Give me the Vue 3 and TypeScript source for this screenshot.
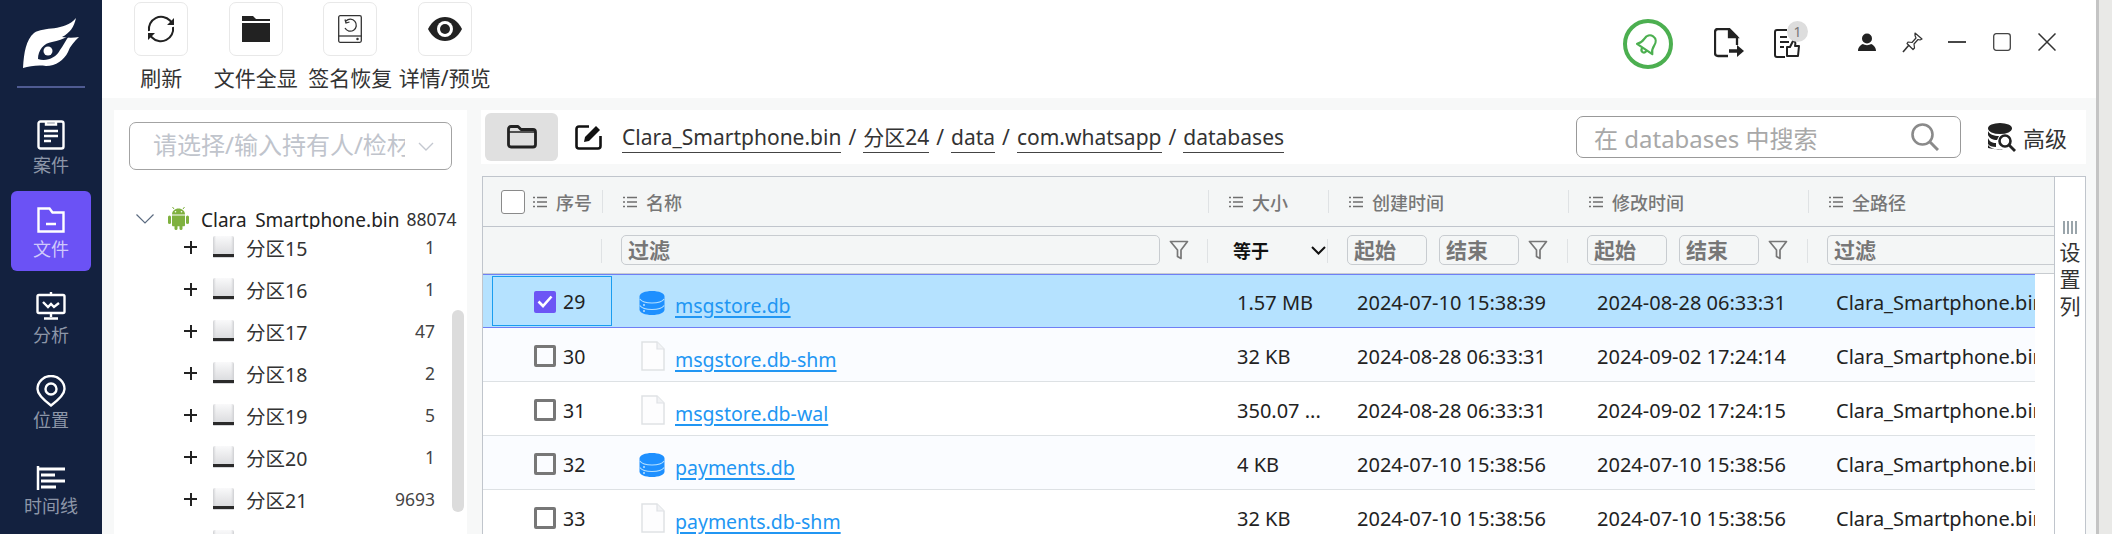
<script setup lang="ts">
interface Row { no: number; name: string; db: boolean; size: string; created: string; modified: string }

const partitions: { id: number; label: string; count: string }[] = [
  { id: 15, label: '分区15', count: '1' },
  { id: 16, label: '分区16', count: '1' },
  { id: 17, label: '分区17', count: '47' },
  { id: 18, label: '分区18', count: '2' },
  { id: 19, label: '分区19', count: '5' },
  { id: 20, label: '分区20', count: '1' },
  { id: 21, label: '分区21', count: '9693' },
  { id: 22, label: '', count: '' },
]

const rows: Row[] = [
  { no: 29, name: 'msgstore.db', db: true, size: '1.57 MB', created: '2024-07-10 15:38:39', modified: '2024-08-28 06:33:31' },
  { no: 30, name: 'msgstore.db-shm', db: false, size: '32 KB', created: '2024-08-28 06:33:31', modified: '2024-09-02 17:24:14' },
  { no: 31, name: 'msgstore.db-wal', db: false, size: '350.07 ...', created: '2024-08-28 06:33:31', modified: '2024-09-02 17:24:15' },
  { no: 32, name: 'payments.db', db: true, size: '4 KB', created: '2024-07-10 15:38:56', modified: '2024-07-10 15:38:56' },
  { no: 33, name: 'payments.db-shm', db: false, size: '32 KB', created: '2024-07-10 15:38:56', modified: '2024-07-10 15:38:56' },
]

const crumbs = ['Clara_Smartphone.bin', '分区24', 'data', 'com.whatsapp', 'databases']
const heads = ['大小', '创建时间', '修改时间', '全路径']
</script>

<template>
  <div class="app">
    <svg class="defs" aria-hidden="true">
      <symbol id="list" viewBox="0 0 14 12">
        <path d="M0 1.500h2M4 1.500h10M0 6h2M4 6h10M0 10.500h2M4 10.500h10" fill="none" stroke="#6f6f6f" stroke-width="1.700" />
      </symbol>
      <symbol id="funnel" viewBox="0 0 20 20">
        <path d="M1.500 1.500h17L12 10v8.500L8.500 16.500V10z" fill="none" stroke="#777" stroke-width="1.700" stroke-linejoin="round" />
      </symbol>
      <symbol id="file" viewBox="0 0 24 30">
        <path d="M1 1h15l7 7v21H1z" fill="#fdfdfe" stroke="#dfe2e5" stroke-width="1.500" />
        <path d="M16 1v7h7" fill="#f1f2f4" stroke="#dfe2e5" stroke-width="1.200" />
      </symbol>
      <symbol id="db" viewBox="0 0 26 26">
        <path d="M13 1C6 1 .5 3.200.5 6.500v13C.5 22.800 6 25 13 25s12.500-2.200 12.500-5.500v-13C25.500 3.200 20 1 13 1z" fill="#1e90ff" />
        <path d="M.8 9c2 2.800 7 4 12.200 4s10.200-1.200 12.200-4M.8 15.500c2 2.800 7 4 12.200 4s10.200-1.200 12.200-4" fill="none" stroke="#b5e0ff" stroke-width="1.200" />
        <circle cx="5" cy="15" r=".9" fill="#cdeaff" />
        <circle cx="5" cy="21" r=".9" fill="#cdeaff" />
      </symbol>
    </svg>

    <nav class="sidebar">
      <div class="logo">
        <svg width="58" height="54" viewBox="22 17 58 54">
          <path d="M23 68C24 52 26 40 34 33 44 26 64 32 76 18 74 27 70 33 62 37 68 38 74 38 79 37 74 42 70 46 68 52 64 60 56 66 46 66 38 65 30 66 23 68Z" fill="#fff" />
          <path d="M38 59C38 50 44 43 52 42 58 41 63 39 69 36 66 40 63 46 60 50 56 58 46 62 38 59Z" fill="#13213f" />
          <circle cx="48" cy="51" r="4.500" fill="#fff" />
        </svg>
      </div>
      <div class="nav-item n-case">
        <svg width="28" height="30" viewBox="0 0 28 30" fill="none" stroke="#fff" stroke-width="2.400">
          <rect x="1.500" y="1.500" width="25" height="27" rx="2" />
          <path d="M9 1.500v3h10v-3M7 11h14M7 16h14M7 21h7" />
        </svg>
        <span>案件</span>
      </div>
      <div class="nav-item active">
        <svg width="28" height="26" viewBox="0 0 28 26" fill="none" stroke="#fff" stroke-width="2.400">
          <path d="M1.500 1.500h11l3 4h11v19h-25zM9 17h10" />
        </svg>
        <span>文件</span>
      </div>
      <div class="nav-item n-ana">
        <svg width="30" height="28" viewBox="0 0 30 28" fill="none" stroke="#fff" stroke-width="2.400">
          <rect x="1.500" y="3" width="27" height="18" rx="1.500" />
          <path d="M15 0v3M15 21v4M8 26.500h14M7 10l5 5 3-3 3 3 5-4" />
        </svg>
        <span>分析</span>
      </div>
      <div class="nav-item n-loc">
        <svg width="30" height="32" viewBox="0 0 30 32" fill="none" stroke="#fff" stroke-width="2.400">
          <path d="M15 30.500C9 26 1.500 20 1.500 14a13.500 13 0 0 1 27 0c0 6-7.500 12-13.500 16.500z" />
          <circle cx="15" cy="14" r="5.500" />
        </svg>
        <span>位置</span>
      </div>
      <div class="nav-item n-time">
        <svg width="30" height="24" viewBox="0 0 30 24" fill="none" stroke="#fff" stroke-width="3">
          <path d="M2 0v24" stroke-width="2.500" />
          <path d="M2 3h27M5 9h14M5 15h24M5 21h15" />
        </svg>
        <span>时间线</span>
      </div>
    </nav>

    <div class="main">
      <header class="toolbar">
        <div class="tools">
          <div class="tool">
            <div class="tool-btn">
              <svg width="30" height="30" viewBox="0 0 30 30" fill="none" stroke="#222" stroke-width="2">
                <path d="M3 17a12.300 12.300 0 0 1 21-10.500L27 10M27 13a12.300 12.300 0 0 1-21 10.500L3 20" />
                <path d="M28 4v7h-7M2 26v-7h7" stroke-width="0" fill="#222" />
              </svg>
            </div>
            <span>刷新</span>
          </div>
          <div class="tool">
            <div class="tool-btn">
              <svg width="28" height="26" viewBox="0 0 28 26">
                <path d="M0 0h11l3 3h14v2H0z M0 7h28v19H0z" fill="#222" />
              </svg>
            </div>
            <span>文件全显</span>
          </div>
          <div class="tool">
            <div class="tool-btn">
              <svg width="24" height="28" viewBox="0 0 24 28" fill="none" stroke="#333" stroke-width="1.300">
                <rect x=".7" y=".7" width="22.600" height="26.600" rx="1.500" />
                <path d="M.7 21h22.600" />
                <path d="M8 6a6 6 0 1 1-1 7" />
                <path d="M7 4.500l1 3.500 3.500-1" />
                <circle cx="19.500" cy="24" r=".6" fill="#333" />
              </svg>
            </div>
            <span>签名恢复</span>
          </div>
          <div class="tool">
            <div class="tool-btn">
              <svg width="34" height="24" viewBox="0 0 34 24">
                <path d="M0 12C4 4 10 0 17 0s13 4 17 12c-4 8-10 12-17 12S4 20 0 12z" fill="#222" />
                <circle cx="17" cy="12" r="8" fill="#fff" />
                <circle cx="17" cy="12" r="5" fill="#222" />
              </svg>
            </div>
            <span>详情/预览</span>
          </div>
        </div>
        <div class="actions">
          <div class="bell">
            <svg width="26" height="26" viewBox="0 0 24 24" fill="none" stroke="#4caf50" stroke-width="2" stroke-linejoin="round">
              <g transform="rotate(34 12 12)">
                <path d="M12 3.500c-3.500 0-5.500 2.800-5.500 6.500 0 3.500-1 5.500-3 7.500h17c-2-2-3-4-3-7.500 0-3.700-2-6.500-5.500-6.500z" />
                <path d="M9.500 17.500c0 2 1 3.500 2.500 3.500s2.500-1.500 2.500-3.500" />
              </g>
            </svg>
          </div>
          <svg class="ic-export" width="30" height="30" viewBox="0 0 30 30" fill="none" stroke="#222" stroke-width="2.300">
            <path d="M14 28H4c-2 0-3-1-3-3V4c0-2 1-3 3-3h11l8 8v8" />
            <path d="M15 1v8h8z" fill="#222" />
            <path d="M15 23h10" stroke-width="3.500" />
            <path d="M23 17l7 6-7 6z" fill="#222" stroke="none" />
          </svg>
          <div class="doc">
            <svg width="26" height="29" viewBox="0 0 26 29" fill="none" stroke="#222" stroke-width="2">
              <path d="M11 28H3c-1.200 0-2-.8-2-2V3c0-1.200.8-2 2-2h10M6 8h7M6 13h9M6 18h4" />
              <path d="M13 18h3l3-6c2 0 3 1 2 5h4l-1 10H13z" stroke-linejoin="round" />
            </svg>
            <span class="badge">1</span>
          </div>
          <svg class="ic-user" width="18" height="18" viewBox="0 0 18 18" fill="#222">
            <circle cx="9" cy="5.500" r="5" />
            <path d="M0 18c0-4 3-6.500 5-7 2 1.500 6 1.500 8 0 2 .5 5 3 5 7z" />
          </svg>
          <svg class="ic-pin" width="21" height="21" viewBox="0 0 21 21" fill="none" stroke="#333" stroke-width="1.200" stroke-linejoin="round">
            <path d="M13 1l7 6-2 1-2-.5-4 4.500.5 4-1.500 1.500-6-6L6 10l4 .5 4-4.500L13 3.500z" />
            <path d="M7 13l-6 7" stroke-width="1.600" />
          </svg>
          <svg class="ic-win" width="18" height="18" viewBox="0 0 18 18" stroke="#333" stroke-width="1.800"><path d="M0 9h18" /></svg>
          <svg class="ic-win" width="18" height="18" viewBox="0 0 18 18" fill="none" stroke="#444" stroke-width="1.300"><rect x=".7" y=".7" width="16.600" height="16.600" rx="2.500" /></svg>
          <svg class="ic-win" width="18" height="18" viewBox="0 0 18 18" fill="none" stroke="#333" stroke-width="1.500"><path d="M.5.500l17 17M17.500.500l-17 17" /></svg>
        </div>
      </header>

      <div class="content">
        <aside class="tree">
          <div class="select">
            <span class="select-text">请选择/输入持有人/检材</span>
            <svg width="16" height="9" viewBox="0 0 16 9" fill="none" stroke="#c4c8d0" stroke-width="1.400"><path d="M1 1l7 7 7-7" /></svg>
          </div>
          <div class="root">
            <svg class="root-chev" width="18" height="10" viewBox="0 0 18 10" fill="none" stroke="#5b6b80" stroke-width="1.200"><path d="M.5.500L9 9 17.500.500" /></svg>
            <svg class="android" width="21" height="23" viewBox="0 0 21 23" fill="#7fb13f">
              <path d="M4 7.500C4 4 7 1.500 10.500 1.500S17 4 17 7.500z" />
              <path d="M6 2L4.500 0M15 2l1.500-2" stroke="#7fb13f" stroke-width="1" />
              <path d="M4 8.500h13v9.500c0 .8-.5 1.300-1.200 1.300H5.200C4.500 19.300 4 18.800 4 18z" />
              <rect x="0" y="8.500" width="3" height="8.500" rx="1.500" />
              <rect x="18" y="8.500" width="3" height="8.500" rx="1.500" />
              <rect x="6.500" y="18" width="3" height="5" rx="1.500" />
              <rect x="11.500" y="18" width="3" height="5" rx="1.500" />
              <circle cx="7.500" cy="4.800" r=".8" fill="#fff" />
              <circle cx="13.500" cy="4.800" r=".8" fill="#fff" />
            </svg>
            <span class="root-name">Clara_Smartphone.bin</span>
            <span class="root-count">88074</span>
          </div>
          <div v-for="p in partitions" :key="p.id" class="node">
            <span class="plus"></span>
            <span class="disk"></span>
            <span class="node-name">{{ p.label }}</span>
            <span class="node-count">{{ p.count }}</span>
          </div>
          <div class="thumb"></div>
        </aside>

        <section class="right">
          <div class="crumbbar">
            <div class="folder-btn">
              <svg width="30" height="24" viewBox="0 0 30 24" fill="none" stroke="#222" stroke-width="2.800" stroke-linejoin="round">
                <path d="M1.500 4c0-1.500 1-2.500 2.500-2.500h7l3 3h12c1.500 0 2.500 1 2.500 2.500v12.500c0 1.500-1 2.500-2.500 2.500H4c-1.500 0-2.500-1-2.500-2.500z" />
                <path d="M1.500 7h27" stroke-width="1.500" />
              </svg>
            </div>
            <svg class="edit" width="28" height="27" viewBox="0 0 28 27" fill="none" stroke="#111" stroke-width="2.600">
              <path d="M14 2.500H4c-1.500 0-2.500 1-2.500 2.500v17c0 1.500 1 2.500 2.500 2.500h19c1.500 0 2.500-1 2.500-2.500V12" />
              <path d="M9 18l1-5L21 2l4 4-11 11z" fill="#111" stroke="none" />
            </svg>
            <div class="crumbs">
              <template v-for="(c, i) in crumbs" :key="c">
                <span v-if="i > 0" class="slash">/</span>
                <span class="crumb">{{ c }}</span>
              </template>
            </div>
            <div class="search">
              <span>在 databases 中搜索</span>
              <svg width="28" height="28" viewBox="0 0 28 28" fill="none" stroke="#8a8a8a" stroke-width="2.600">
                <circle cx="11.500" cy="11.500" r="10" />
                <path d="M18.500 18.500l8.500 8.500" stroke-width="3" />
              </svg>
            </div>
            <div class="adv">
              <svg width="28" height="29" viewBox="0 0 28 29">
                <ellipse cx="12" cy="5.500" rx="12" ry="5.500" fill="#222" />
                <path d="M0 8c1 3 6 5 11 5l-2 4C5 17 1 15 0 12z M0 15c1 3 4 5 8 5l0 4c-4 0-7-1-8-3z M0 22c2 3 6 4 10 5 2 0 4 0 5-.5C10 27 4 26 0 25z" fill="#222" />
                <circle cx="17" cy="18" r="5.500" fill="none" stroke="#222" stroke-width="2.600" />
                <path d="M21 22l6 6" stroke="#222" stroke-width="2.800" />
              </svg>
              <span>高级</span>
            </div>
          </div>

          <div class="table-wrap">
            <div class="table">
              <div class="thead">
                <div class="th first">
                  <span class="cb-head"></span>
                  <svg class="li" width="14" height="12"><use href="#list" /></svg>
                  <span>序号</span>
                </div>
                <div class="th name-th">
                  <svg class="li" width="14" height="12"><use href="#list" /></svg>
                  <span>名称</span>
                </div>
                <div v-for="h in heads" :key="h" class="th">
                  <svg class="li" width="14" height="12"><use href="#list" /></svg>
                  <span>{{ h }}</span>
                </div>
              </div>
              <div class="tfilter">
                <div class="tf"></div>
                <div class="tf tf-name">
                  <span class="inp grow">过滤</span>
                  <svg class="fn" width="20" height="20"><use href="#funnel" /></svg>
                </div>
                <div class="tf tf-eq">
                  <span>等于</span>
                  <svg width="15" height="9" viewBox="0 0 15 9" fill="none" stroke="#111" stroke-width="2"><path d="M1 1l6.500 6.500L14 1" /></svg>
                </div>
                <div class="tf tf-range">
                  <span class="inp small">起始</span>
                  <span class="inp small">结束</span>
                  <svg class="fn" width="20" height="20"><use href="#funnel" /></svg>
                </div>
                <div class="tf tf-range">
                  <span class="inp small">起始</span>
                  <span class="inp small">结束</span>
                  <svg class="fn" width="20" height="20"><use href="#funnel" /></svg>
                </div>
                <div class="tf tf-path">
                  <span class="inp grow">过滤</span>
                </div>
              </div>
              <div class="tbody">
                <div v-for="(r, i) in rows" :key="r.no" class="tr" :class="{ selected: i === 0, alt: i === 1 || i === 3 }">
                  <div class="td td-no" :class="{ focus: i === 0 }">
                    <span v-if="i === 0" class="cb on">
                      <svg width="16" height="13" viewBox="0 0 16 13" fill="none" stroke="#fff" stroke-width="2.600"><path d="M1.500 6.500l4.500 4.500L14.500 1.500" /></svg>
                    </span>
                    <span v-else class="cb"></span>
                    <span class="num">{{ r.no }}</span>
                  </div>
                  <div class="td td-name">
                    <svg v-if="r.db" class="ic-db" width="26" height="26"><use href="#db" /></svg>
                    <svg v-else class="ic-file" width="24" height="30"><use href="#file" /></svg>
                    <a class="link">{{ r.name }}</a>
                  </div>
                  <div class="td td-size">{{ r.size }}</div>
                  <div class="td td-date">{{ r.created }}</div>
                  <div class="td td-date">{{ r.modified }}</div>
                  <div class="td td-path">Clara_Smartphone.bin</div>
                </div>
              </div>
            </div>
            <div class="setcol">
              <div class="bars"><i></i><i></i><i></i><i></i></div>
              <span>设</span><span>置</span><span>列</span>
            </div>
          </div>
        </section>
      </div>
    </div>
    <div class="edge"></div>
  </div>
</template>

<style>
html, body { margin: 0; padding: 0; background: #fff; }
</style>

<style scoped>
.app {
  width: 2112px;
  height: 534px;
  display: flex;
  overflow: hidden;
  position: relative;
  font-family: "Noto Sans", "Noto Sans CJK SC", sans-serif;
  color: #333;
}
.defs { position: absolute; width: 0; height: 0; }
.sidebar {
  width: 102px;
  flex: none;
  background: #13213f;
  display: flex;
  flex-direction: column;
  align-items: center;
}
.logo {
  width: 68px;
  height: 88px;
  flex: none;
  padding-top: 17px;
  box-sizing: border-box;
  border-bottom: 2px solid #4f5b92;
  display: flex;
  justify-content: center;
  align-items: flex-start;
}
.nav-item {
  width: 80px;
  flex: none;
  display: flex;
  flex-direction: column;
  align-items: center;
  justify-content: flex-start;
  box-sizing: border-box;
  border-radius: 6px;
  color: #8d96a8;
  font-size: 18px;
  line-height: 24px;
}
.nav-item svg { margin-bottom: 3px; flex: none; }
.n-case { margin-top: 32px; height: 71px; }
.nav-item.active {
  height: 80px;
  padding-top: 16px;
  background: #6b52f5;
  color: #cfc9fb;
}
.nav-item.active svg { margin-bottom: 4px; }
.n-ana { margin-top: 21px; height: 83px; }
.n-loc { height: 91px; }
.n-loc svg { margin-bottom: 1px; }
.n-time { height: 68px; }
.n-time svg { margin-bottom: 4px; }
.main {
  width: 1994px;
  flex: none;
  display: flex;
  flex-direction: column;
  background: #f7f8f8;
}
.toolbar {
  height: 98px;
  flex: none;
  background: #fff;
  display: flex;
  padding-left: 12px;
}
.tools { display: grid; grid-template-columns: repeat(4, 94.5px); }
.tool { display: flex; flex-direction: column; align-items: center; }
.tool-btn {
  width: 54px;
  height: 54px;
  margin-top: 2px;
  box-sizing: border-box;
  border: 1px solid #e8e8e8;
  border-radius: 7px;
  display: flex;
  align-items: center;
  justify-content: center;
}
.tool span {
  font-size: 21px;
  line-height: 28px;
  margin-top: 8px;
  white-space: nowrap;
  color: #333;
}
.actions {
  margin-left: auto;
  height: 88px;
  display: flex;
  align-items: center;
  padding-right: 40px;
}
.bell {
  width: 50px;
  height: 50px;
  box-sizing: border-box;
  border: 4px solid #4caf50;
  border-radius: 50%;
  display: flex;
  align-items: center;
  justify-content: center;
}
.ic-export { margin-left: 41px; margin-top: -2px; }
.doc { margin-left: 30px; position: relative; height: 29px; margin-top: -2px; }
.doc svg { display: block; }
.badge {
  position: absolute;
  left: 13px;
  top: -8px;
  width: 21px;
  height: 21px;
  border-radius: 50%;
  background: #ddd;
  color: #777;
  font-size: 14px;
  line-height: 21px;
  text-align: center;
}
.ic-user { margin-left: 58px; margin-top: -4px; }
.ic-pin { margin-left: 26px; margin-top: -4px; }
.ic-win { margin-left: 27px; margin-top: -4px; }
.ic-pin + .ic-win { margin-left: 25px; }
.content { flex: 1; display: flex; padding: 12px 0 0 12px; min-height: 0; }
.tree {
  width: 353px;
  flex: none;
  background: #fff;
  position: relative;
  overflow: hidden;
  box-sizing: border-box;
}
.select {
  width: 323px;
  height: 48px;
  margin: 12px 0 28px 15px;
  box-sizing: border-box;
  border: 1px solid #a3a3a3;
  border-radius: 7px;
  display: flex;
  align-items: center;
  padding-left: 23px;
}
.select-text {
  width: 252px;
  overflow: hidden;
  white-space: nowrap;
  font-size: 24px;
  line-height: 32px;
  margin-top: -2px;
  color: #c0c4cc;
  margin-right: 13px;
}
.root { display: flex; align-items: center; height: 42px; margin-bottom: -14px; }
.root-chev { margin-left: 22px; }
.android { margin-left: 14px; margin-top: -2px; }
.root-name {
  margin-left: 12px;
  font-size: 19px;
  line-height: 24px;
  height: 21px;
  margin-bottom: 1px;
  overflow: hidden;
  color: #222;
  white-space: nowrap;
}
.root-count { margin-left: 7px; font-size: 17.500px; color: #333; }
.node { display: flex; align-items: center; height: 42px; }
.plus {
  width: 13px;
  height: 13px;
  margin-left: 70px;
  flex: none;
  background: linear-gradient(#222, #222) center/13px 2px no-repeat, linear-gradient(#222, #222) center/2px 13px no-repeat;
}
.disk {
  width: 21px;
  height: 22px;
  margin-left: 16px;
  flex: none;
  box-sizing: border-box;
  border-radius: 2px 2px 1px 1px;
  background:
    linear-gradient(#2a2a2a, #2a2a2a) 0 18px/100% 3px no-repeat,
    linear-gradient(90deg, #cfd0d3 0, rgba(255, 255, 255, 0) 14%, rgba(255, 255, 255, 0) 86%, #cfd0d3 100%),
    linear-gradient(#f9f9fa, #d6d7da);
}
.node-name { margin-left: 12px; font-size: 19.500px; color: #333; white-space: nowrap; }
.node-count { margin-left: auto; margin-right: 32px; font-size: 17.500px; color: #444; }
.thumb {
  position: absolute;
  left: 338px;
  top: 200px;
  width: 12px;
  height: 202px;
  border-radius: 6px;
  background: #dcdcdc;
}
.right { width: 1605px; margin-left: 14px; flex: none; display: flex; flex-direction: column; }
.crumbbar {
  height: 54px;
  flex: none;
  background: #fff;
  display: flex;
  align-items: center;
  padding-left: 4px;
}
.folder-btn {
  width: 73px;
  height: 48px;
  border-radius: 6px;
  background: #e0e0e0;
  display: flex;
  align-items: center;
  justify-content: center;
}
.edit { margin-left: 17px; }
.crumbs { display: flex; align-items: center; margin-left: 19px; font-size: 21px; color: #333; white-space: nowrap; }
.crumb { border-bottom: 1.500px solid #444; line-height: 30px; }
.slash { margin: 0 7px; }
.search {
  width: 385px;
  height: 42px;
  margin-left: auto;
  box-sizing: border-box;
  border: 1px solid #999;
  border-radius: 7px;
  display: flex;
  align-items: center;
  justify-content: space-between;
  padding: 0 21px 0 17px;
  font-size: 24px;
  color: #a8a8a8;
  white-space: nowrap;
}
.adv { display: flex; align-items: center; margin-left: 27px; width: 98px; font-size: 22px; color: #333; }
.adv span { margin-left: 7px; }
.table-wrap {
  margin-top: 12px;
  flex: 1;
  min-height: 0;
  display: flex;
  width: 1604px;
  margin-left: 1px;
  box-sizing: border-box;
  border-top: 1px solid #c0c5cc;
  border-left: 1px solid #c0c5cc;
  border-right: 1px solid #c0c5cc;
  overflow: hidden;
}
.table { width: 1571px; flex: none; background: #fff; overflow: hidden; }
.thead, .tfilter {
  display: grid;
  grid-template-columns: 119px 606px 120px 240px 240px 246px;
  background: #f4f6f6;
}
.thead { height: 50px; border-bottom: 1px solid #c0c5cc; box-sizing: border-box; }
.th {
  display: flex;
  align-items: center;
  position: relative;
  padding-left: 21px;
  font-size: 18px;
  font-weight: 500;
  color: #777;
  white-space: nowrap;
}
.th .li { margin-right: 9px; }
.th::after {
  content: "";
  position: absolute;
  left: 0;
  top: 13px;
  height: 23px;
  width: 1px;
  background: #dfe2e4;
}
.first { padding-left: 18px; }
.first::after { display: none; }
.cb-head {
  width: 24px;
  height: 24px;
  box-sizing: border-box;
  border: 1px solid #8a8a8a;
  border-radius: 3px;
  background: #fff;
  margin-right: 8px;
}
.tfilter { height: 47px; border-bottom: 1px solid #c8ccd0; box-sizing: border-box; }
.tf {
  display: flex;
  align-items: center;
  position: relative;
  padding-bottom: 1px;
}
.tf::after {
  content: "";
  position: absolute;
  right: 0;
  top: 12px;
  height: 24px;
  width: 1px;
  background: #dfe2e4;
}
.tf-path::after { display: none; }
.inp {
  height: 30px;
  box-sizing: border-box;
  border: 1px solid #c8ccd0;
  border-radius: 5px;
  font-size: 21px;
  font-weight: 700;
  color: #777;
  line-height: 28px;
  padding-left: 6px;
  white-space: nowrap;
  overflow: hidden;
}
.grow { flex: 1; }
.small { width: 81px; }
.small + .small { margin-left: 12px; }
.tf-name { padding-left: 19px; }
.fn { margin: 0 20px 0 9px; flex: none; }
.tf-name .fn { margin-right: 19px; }
.tf-eq { padding: 0 2px 0 25px; justify-content: space-between; font-size: 18px; font-weight: 700; color: #111; }
.tf-range { padding-left: 19px; }
.tf-path { padding-left: 19px; }
.tf-path .inp { border-right: 0; border-radius: 5px 0 0 5px; margin-right: -20px; }
.tbody { width: 1552px; }
.tr {
  display: grid;
  grid-template-columns: 119px 606px 120px 240px 240px 227px;
  height: 54px;
  box-sizing: border-box;
  border-bottom: 1px solid #dde1e4;
  background: #fff;
  font-size: 20px;
  color: #222;
}
.tr.alt { background: #fafcff; }
.tr.selected {
  background: #b5e2ff;
  border-top: 1px solid #6f7ff5;
  border-bottom: 1px solid #6f7ff5;
}
.td { display: flex; align-items: center; white-space: nowrap; overflow: hidden; padding-top: 3px; }
.td-no { padding-left: 51px; box-sizing: border-box; margin: 0; }
.td-no .cb { margin-right: 7px; }
.num { font-size: 19.500px; }
.focus {
  margin: 1px -10px 1px 9px;
  padding-left: 41px;
  padding-top: 1px;
  border: 1px solid #1a9df0;
}
.selected .td-no { height: 50px; }
.cb {
  width: 22px;
  height: 22px;
  box-sizing: border-box;
  border: 3px solid #777;
  border-radius: 2px;
  flex: none;
}
.cb.on {
  background: #6c55f5;
  border: 0;
  display: flex;
  align-items: center;
  justify-content: center;
}
.td-name { padding-left: 37px; padding-top: 0; }
.ic-db { margin-right: 10px; margin-top: 4px; flex: none; }
.ic-file { margin-left: 2px; margin-right: 10px; margin-top: 2px; flex: none; }
.link {
  font-size: 19.500px;
  color: #2196f3;
  text-decoration: underline;
  text-decoration-thickness: 2px;
  text-underline-offset: 3px;
  margin-top: 9px;
}
.td-size { padding-left: 29px; }
.td-date { padding-left: 29px; }
.td-path { padding-left: 28px; }
.setcol {
  flex: 1;
  background: #fff;
  display: flex;
  flex-direction: column;
  align-items: center;
  border-left: 1px solid #c0c5cc;
  padding-top: 44px;
  font-size: 21px;
  color: #333;
  line-height: 27px;
}
.bars { display: flex; gap: 2px; height: 13px; margin-bottom: 5px; }
.bars i { width: 2px; background: #9aa5ab; }
.edge {
  width: 16px;
  flex: none;
  box-sizing: border-box;
  background: #e9e9e7;
  border-left: 3px solid #c4c4c4;
}
</style>
